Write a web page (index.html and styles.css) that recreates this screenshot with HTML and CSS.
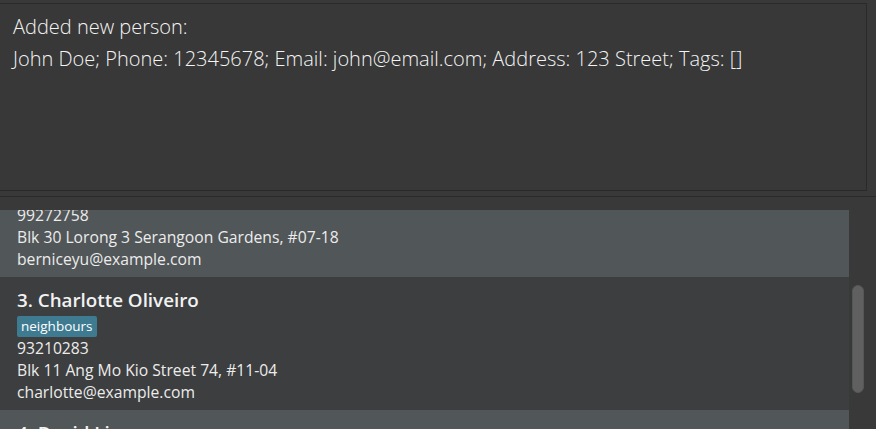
FILE: index.html
```html
<!DOCTYPE html>
<html lang="en">
<head>
<meta charset="utf-8">
<title>Address Book</title>
<link rel="stylesheet" href="styles.css">
</head>
<body>
<div class="app">
  <section class="result-pane">
    <div class="result-box">
      <p class="result-line">Added new person:</p>
      <p class="result-line">John Doe; Phone: 12345678; Email: john@email.com; Address: 123 Street; Tags: []</p>
    </div>
  </section>
  <div class="divider"></div>
  <section class="list-pane">
    <div class="list-viewport">
      <div class="list-content">
        <div class="card odd">
          <div class="name">2. Bernice Yu</div>
          <div class="tags"><span class="tag">colleagues</span><span class="tag">friends</span></div>
          <div class="detail">99272758</div>
          <div class="detail">Blk 30 Lorong 3 Serangoon Gardens, #07-18</div>
          <div class="detail">berniceyu@example.com</div>
        </div>
        <div class="card even">
          <div class="name">3. Charlotte Oliveiro</div>
          <div class="tags"><span class="tag">neighbours</span></div>
          <div class="detail">93210283</div>
          <div class="detail">Blk 11 Ang Mo Kio Street 74, #11-04</div>
          <div class="detail">charlotte@example.com</div>
        </div>
        <div class="card odd">
          <div class="name">4. David Li</div>
          <div class="tags"><span class="tag">family</span></div>
          <div class="detail">91031282</div>
          <div class="detail">Blk 436 Serangoon Gardens Street 26, #16-43</div>
          <div class="detail">lidavid@example.com</div>
        </div>
      </div>
    </div>
    <div class="scrollbar"><div class="thumb"></div></div>
  </section>
</div>
</body>
</html>
```
FILE: styles.css
```css
html, body {
  margin: 0;
  padding: 0;
}
body {
  width: 876px;
  height: 429px;
  overflow: hidden;
  background: #393939;
  color: #ffffff;
  font-family: "Open Sans", "Noto Sans", "Liberation Sans", sans-serif;
}
.app {
  display: flex;
  flex-direction: column;
  height: 429px;
}
.result-pane {
  padding: 3px 9px 0 0;
  flex: none;
}
.result-box {
  box-sizing: border-box;
  height: 188px;
  border: 1px solid #2a2a2a;
  border-left: 0;
  background: #383838;
  padding: 7px 0 0 13px;
}
.result-line {
  margin: 0;
  font-family: "Open Sans", "Noto Sans", sans-serif;
  font-weight: 300;
  font-size: 20px;
  line-height: 32px;
  color: #f4f4f4;
  white-space: nowrap;
}
.divider {
  flex: none;
  height: 1px;
  margin-top: 5px;
  background: #2a2a2a;
}
.list-pane {
  flex: 1;
  display: flex;
  margin-top: 13px;
  min-height: 0;
}
.list-viewport {
  width: 849px;
  overflow: hidden;
}
.list-content {
  margin-top: -66px;
}
.card {
  box-sizing: border-box;
  height: 133px;
  padding: 11px 0 0 17px;
}
.card.odd { background: #515658; }
.card.even { background: #3c3e3f; }
.name {
  font-size: 18.8px;
  font-weight: 600;
  line-height: 24px;
  color: #f2f2f2;
  white-space: nowrap;
}
.tags {
  display: flex;
  gap: 4px;
  margin-top: 4px;
  height: 21px;
}
.tag {
  background: #3e7b91;
  color: #ffffff;
  font-size: 13.5px;
  line-height: 21px;
  padding: 0 4px;
  border-radius: 2px;
}
.detail {
  font-size: 15.7px;
  line-height: 22px;
  color: #ececec;
  white-space: nowrap;
}
.scrollbar {
  flex: 1;
  padding: 75px 0 0 3px;
}
.thumb {
  box-sizing: border-box;
  width: 12px;
  height: 108px;
  background: #606060;
  border: 1px solid #565656;
  border-radius: 6px;
}
```
